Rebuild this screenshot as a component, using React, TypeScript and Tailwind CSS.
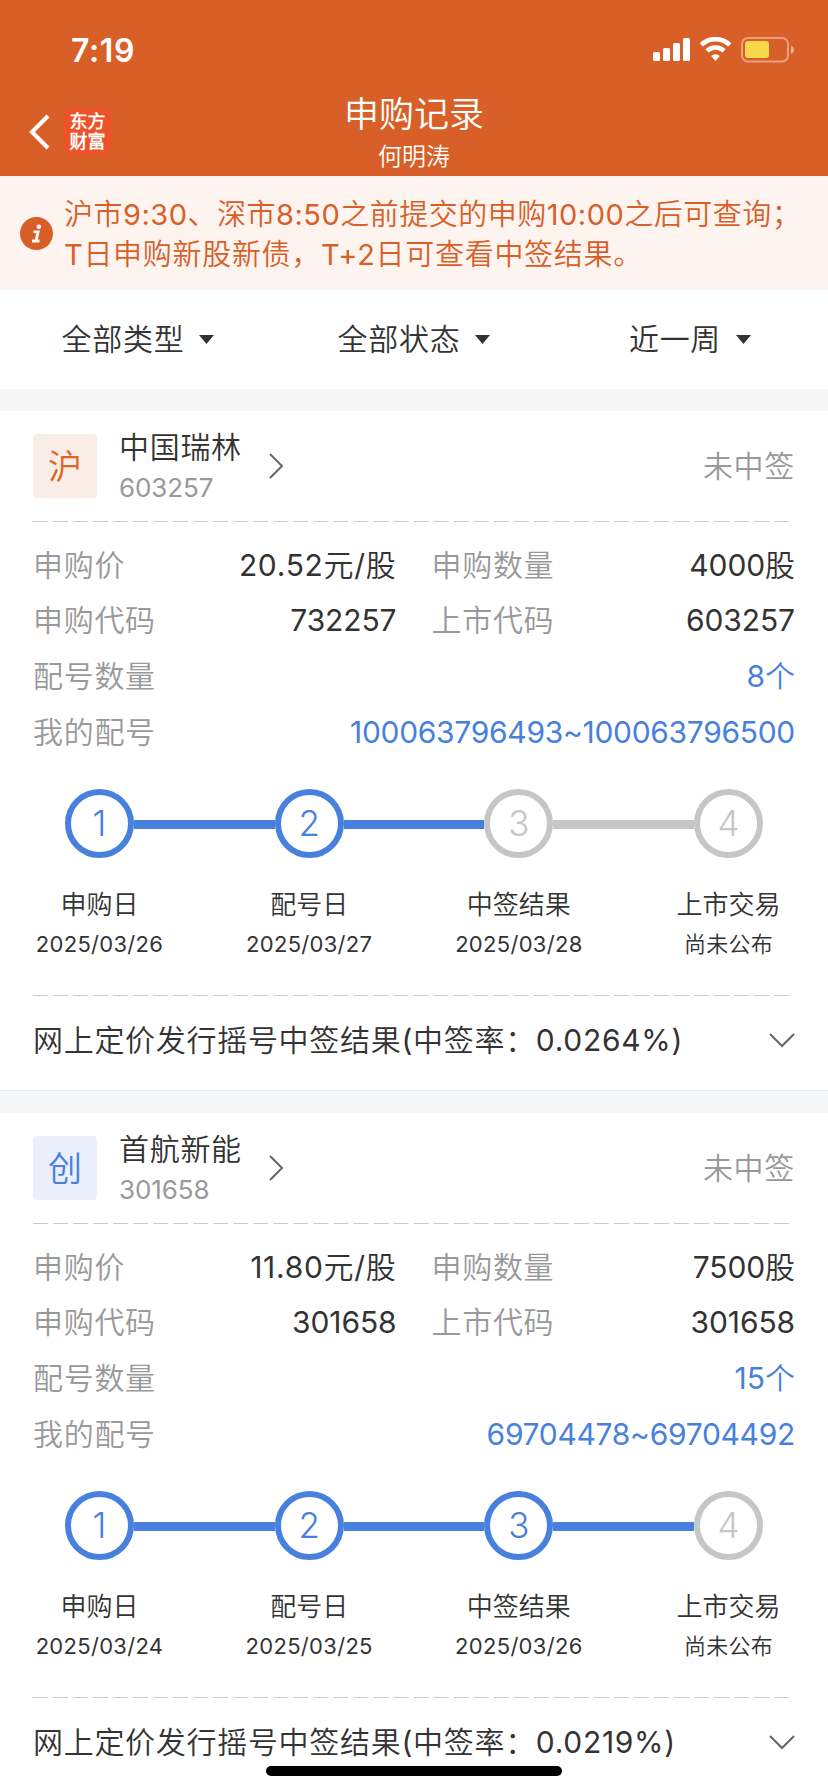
import React from 'react';

type Step = { label: string; date: string };

type RecordItem = {
  market: string;
  marketStyle: string;
  name: string;
  code: string;
  status: string;
  price: string;
  amount: string;
  applyCode: string;
  listCode: string;
  allotCount: string;
  allotRange: string;
  done: number;
  steps: Step[];
  result: string;
};

const records: RecordItem[] = [
  {
    market: '沪',
    marketStyle: 'bg-[#f9ede5] text-[#dc6429]',
    name: '中国瑞林',
    code: '603257',
    status: '未中签',
    price: '20.52元/股',
    amount: '4000股',
    applyCode: '732257',
    listCode: '603257',
    allotCount: '8个',
    allotRange: '100063796493~100063796500',
    done: 2,
    steps: [
      { label: '申购日', date: '2025/03/26' },
      { label: '配号日', date: '2025/03/27' },
      { label: '中签结果', date: '2025/03/28' },
      { label: '上市交易', date: '尚未公布' },
    ],
    result: '网上定价发行摇号中签结果(中签率：0.0264%)',
  },
  {
    market: '创',
    marketStyle: 'bg-[#e9effb] text-[#4880dd]',
    name: '首航新能',
    code: '301658',
    status: '未中签',
    price: '11.80元/股',
    amount: '7500股',
    applyCode: '301658',
    listCode: '301658',
    allotCount: '15个',
    allotRange: '69704478~69704492',
    done: 3,
    steps: [
      { label: '申购日', date: '2025/03/24' },
      { label: '配号日', date: '2025/03/25' },
      { label: '中签结果', date: '2025/03/26' },
      { label: '上市交易', date: '尚未公布' },
    ],
    result: '网上定价发行摇号中签结果(中签率：0.0219%)',
  },
];

const filters = ['全部类型', '全部状态', '近一周'];

const StatusIcons: React.FC = () => (
  <svg className="mt-0.5" width="142" height="26" viewBox="0 0 142 26">
    <g fill="#fff">
      <rect x="0" y="15" width="7" height="9" rx="1.6" />
      <rect x="10" y="11" width="7" height="13" rx="1.6" />
      <rect x="20" y="6" width="7" height="18" rx="1.6" />
      <rect x="30" y="1" width="7" height="23" rx="1.6" />
    </g>
    {/* wifi */}
    <g fill="none" stroke="#fff" strokeWidth="4.6">
      <path d="M48.3 7.900a20.300 20.300 0 0 1 28.400 0" />
      <path d="M54 13.900a12.200 12.200 0 0 1 17 0" />
    </g>
    <path d="M58.200 18.900a6.400 6.400 0 0 1 8.600 0L62.500 24z" fill="#fff" />
    {/* battery */}
    <rect x="89" y="1" width="46" height="23.5" rx="6" fill="none" stroke="#fff" strokeOpacity="0.4" strokeWidth="2" />
    <rect x="92" y="4" width="24" height="17" rx="3" fill="#f8d84b" />
    <path d="M138 8.5c4 1.6 4 6.900 0 8.500z" fill="#fff" fillOpacity="0.5" />
  </svg>
);

const DashedLine: React.FC = () => (
  <svg className="block h-px w-[757px]" viewBox="0 0 757 1">
    <line x1="0" y1="0.5" x2="757" y2="0.5" stroke="#cacaca" strokeWidth="1" strokeDasharray="15.03 5" />
  </svg>
);

const Field: React.FC<{ label: string; value: string; className?: string }> = ({
  label,
  value,
  className = 'text-[#333] tracking-[-0.1px]',
}) => (
  <div className="flex flex-1 items-center justify-between">
    <span className="text-[#999]">{label}</span>
    <span className={className}>{value}</span>
  </div>
);

const Steps: React.FC<{ steps: Step[]; done: number }> = ({ steps, done }) => (
  <div className="flex px-8">
    {steps.map((step, i) => (
      <React.Fragment key={step.label}>
        {i > 0 && <div className={`mt-[31px] h-[9px] flex-1 ${i <= done ? 'bg-[#4880dd]' : 'bg-[#c6c6c6]'}`} />}
        <div className="flex w-[69px] flex-col items-center whitespace-nowrap text-[#333]">
          <div
            className={`flex size-[69px] shrink-0 items-center justify-center rounded-full border-[6.5px] text-[35px] font-light ${
              i < done ? 'border-[#4880dd] text-[#4880dd]' : 'border-[#c6c6c6] text-[#c6c6c6]'
            }`}
          >
            {i + 1}
          </div>
          <div className="mt-[28px] text-[26px] leading-[38px]">{step.label}</div>
          <div className="mt-1 text-[22px] leading-8 tracking-[0.3px]">{step.date}</div>
        </div>
      </React.Fragment>
    ))}
  </div>
);

const RecordCard: React.FC<{ item: RecordItem }> = ({ item }) => (
  <div className="h-[679px] bg-white px-[33px] text-[30px] tracking-[0.7px]">
    <div className="flex h-[110px] items-center">
      <div className={`flex size-16 items-center justify-center rounded text-[34px] tracking-normal ${item.marketStyle}`}>
        {item.market}
      </div>
      <div className="ml-[22px] pt-0.5">
        <div className="leading-[42px] text-[#333]">{item.name}</div>
        <div className="text-[26px] leading-[40px] tracking-[-0.1px] text-[#999]">{item.code}</div>
      </div>
      <svg className="ml-[27px]" width="15" height="26" viewBox="0 0 15 26" fill="none" stroke="#666" strokeWidth="2">
        <path d="M1 1l12 12L1 25" />
      </svg>
      <span className="ml-auto text-[#999]">{item.status}</span>
    </div>
    <DashedLine />
    <div className="pt-[15px]">
      <div className="flex h-14 gap-[35px]">
        <Field label="申购价" value={item.price} className="text-[#333] tracking-[0.7px]" />
        <Field label="申购数量" value={item.amount} />
      </div>
      <div className="flex h-[55px] gap-[35px]">
        <Field label="申购代码" value={item.applyCode} />
        <Field label="上市代码" value={item.listCode} />
      </div>
      <div className="flex h-14">
        <Field label="配号数量" value={item.allotCount} className="text-[#4880dd] tracking-normal" />
      </div>
      <div className="flex h-14">
        <Field label="我的配号" value={item.allotRange} className="text-[#4880dd] tracking-[-0.3px]" />
      </div>
    </div>
    <div className="h-[206px] pt-[29px] tracking-normal">
      <Steps steps={item.steps} done={item.done} />
    </div>
    <div className="mt-[29px]">
      <DashedLine />
    </div>
    <div className="flex h-[89px] items-center justify-between text-[#333]">
      <span className="tracking-[0.7px]">{item.result}</span>
      <svg width="26" height="15" viewBox="0 0 26 15" fill="none" stroke="#666" strokeWidth="2">
        <path d="M1 1l12 12L25 1" />
      </svg>
    </div>
  </div>
);

const App: React.FC = () => {
  return (
    <div className="relative h-[1792px] w-[828px] overflow-hidden bg-white font-['Inter','Noto_Sans_CJK_SC_DemiLight','Noto_Sans_CJK_SC',sans-serif] font-normal">
      {/* Header */}
      <header className="h-44 bg-[#d85f28] text-white">
        <div className="flex h-[98px] items-center justify-between pl-[71px] pr-[33px]">
          <span className="mt-[3px] text-[32px] font-semibold leading-9 tracking-[0.6px]">7:19</span>
          <StatusIcons />
        </div>
        <div className="grid h-[78px] grid-cols-3">
          <div className="flex items-start pl-[28px] pt-[10px]">
            <svg className="mt-1.5" width="22" height="36" viewBox="0 0 22 36" fill="none" stroke="#fff" strokeWidth="4">
              <path d="M20 2L4 18l16 16" />
            </svg>
            <div className="ml-3.5 flex size-[47px] flex-col items-center justify-center rounded-lg bg-[#ee5228] text-[18px] font-bold leading-5">
              <span>东方</span>
              <span>财富</span>
            </div>
          </div>
          <div className="flex flex-col items-center">
            <h1 className="-mt-2 text-[35px] leading-[48px]">申购记录</h1>
            <p className="mt-0.5 text-[24px] leading-[34px]">何明涛</p>
          </div>
        </div>
      </header>

      {/* Notice */}
      <div className="flex h-[114px] items-center bg-[#fdf4f0] pl-5 text-[#d85f28]">
        <svg className="shrink-0" width="33" height="33" viewBox="0 0 33 33">
          <circle cx="16.500" cy="16.500" r="16.500" fill="#d85f28" />
          <circle cx="18.900" cy="9.800" r="2.300" fill="#fff" />
          <path d="M13.500 14.800h4.600l-2 9M12 24h7.500" fill="none" stroke="#fff" strokeWidth="2.800" />
        </svg>
        <div className="ml-[11px] mt-[3px] whitespace-nowrap text-[29px] leading-10">
          <p className="tracking-[0.5px]">沪市9:30、深市8:50之前提交的申购10:00之后可查询；</p>
          <p className="tracking-[0.7px]">T日申购新股新债，T+2日可查看中签结果。</p>
        </div>
      </div>

      {/* Filters */}
      <div className="grid h-[99px] grid-cols-3 bg-white text-[30px] tracking-[0.7px] text-[#333]">
        {filters.map(name => (
          <button key={name} className="flex items-center justify-center gap-[15px]">
            {name}
            <svg width="15" height="9" viewBox="0 0 15 9" fill="#333">
              <path d="M0 0h15L7.500 9z" />
            </svg>
          </button>
        ))}
      </div>
      <div className="h-[22px] bg-[#f6f7f9]" />

      {/* Records */}
      {records.map((item, i) => (
        <React.Fragment key={item.code}>
          {i > 0 && <div className="h-[23px] border-t border-[#e9eaec] bg-[#f6f7f9]" />}
          <RecordCard item={item} />
        </React.Fragment>
      ))}

      {/* Home indicator */}
      <div className="absolute bottom-4 left-[266px] h-2.5 w-[296px] rounded-full bg-black" />
    </div>
  );
};

export default App;
